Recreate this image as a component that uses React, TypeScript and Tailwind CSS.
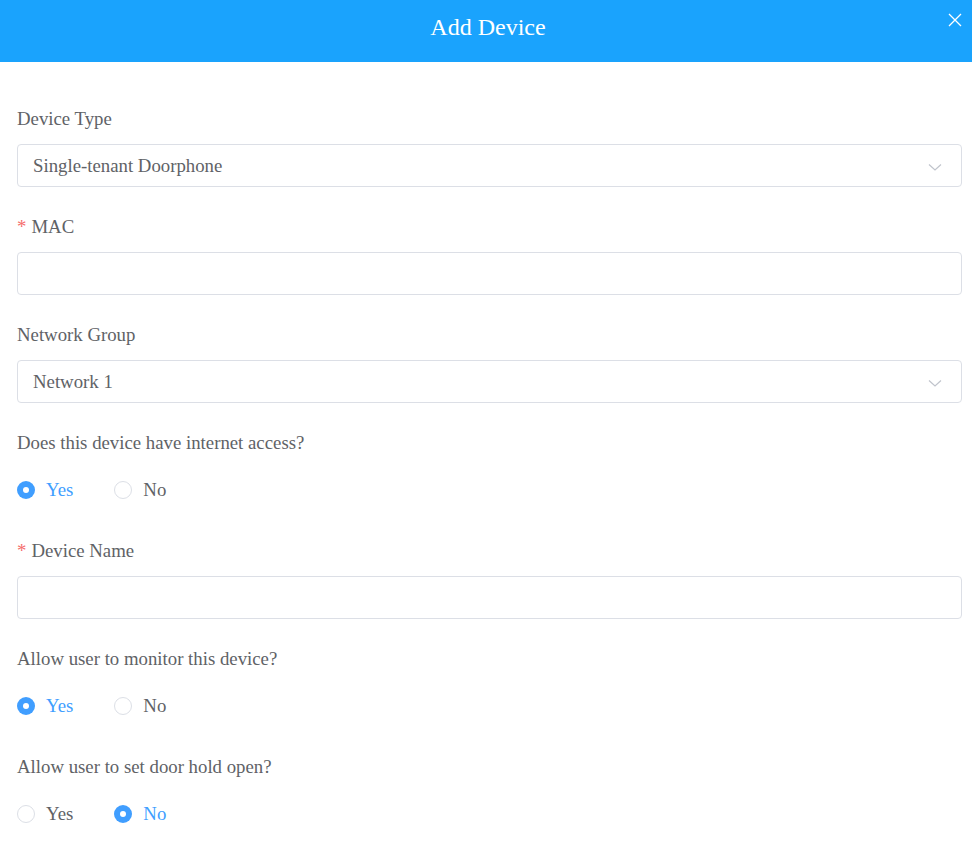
import React, { useState } from 'react';

const serif = { fontFamily: '"Liberation Serif", "Times New Roman", serif' };

const Chevron = () => (
  <svg width="16" height="16" viewBox="0 0 16 16" fill="none" stroke="#c0c4cc" strokeWidth="1.2">
    <path d="M2 5.5 L8 11 L14 5.5" />
  </svg>
);

const Label = ({ text, required }: { text: string; required?: boolean }) => (
  <div className="h-10 flex items-center text-[18.8px] text-[#606266]">
    {required && <span className="text-[#f56c6c] mr-[5px]">*</span>}
    {text}
  </div>
);

const SelectBox = ({ value }: { value: string }) => (
  <div className="mt-[5px] h-[43px] border border-[#dcdfe6] rounded-[4px] flex items-center justify-between pl-[15px] pr-[18px] pt-[2px] text-[18.8px] text-[#606266]">
    <span>{value}</span>
    <Chevron />
  </div>
);

const TextBox = () => (
  <input className="mt-[5px] block w-full h-[43px] border border-[#dcdfe6] rounded-[4px] px-[15px] text-[18.8px] text-[#606266] outline-none" />
);

const RadioGroup = ({ value, onChange }: { value: string; onChange: (v: string) => void }) => (
  <div className="mt-[7px] h-10 flex items-center gap-[41px]">
    {['Yes', 'No'].map((opt) => {
      const on = value === opt;
      return (
        <button key={opt} onClick={() => onChange(opt)} className="flex items-center text-[18.8px]">
          <span
            className={
              on
                ? 'w-[18px] h-[18px] rounded-full bg-[#409eff] flex items-center justify-center'
                : 'w-[18px] h-[18px] rounded-full border border-[#dcdfe6] bg-white'
            }
          >
            {on && <span className="w-[6px] h-[6px] rounded-full bg-white" />}
          </span>
          <span className={on ? 'ml-[11px] text-[#409eff]' : 'ml-[11px] text-[#606266]'}>{opt}</span>
        </button>
      );
    })}
  </div>
);

export default function App() {
  const [internet, setInternet] = useState('Yes');
  const [monitor, setMonitor] = useState('Yes');
  const [holdOpen, setHoldOpen] = useState('No');

  return (
    <div className="w-[972px] h-[855px] bg-white overflow-hidden" style={serif}>
      <div className="relative h-[62px] bg-[#1aa3fd] flex items-center justify-center">
        <h2 className="text-white text-[24px] -mt-[8px] ml-[4px]">Add Device</h2>
        <button className="absolute right-[10px] top-[13px] text-white">
          <svg width="14" height="14" viewBox="0 0 14 14" stroke="white" strokeWidth="1.3">
            <path d="M1 1 L13 13 M13 1 L1 13" />
          </svg>
        </button>
      </div>

      <div className="pt-[37px] pl-[17px] pr-[10px]">
        <Label text="Device Type" />
        <SelectBox value="Single-tenant Doorphone" />

        <div className="mt-5">
          <Label text="MAC" required />
          <TextBox />
        </div>

        <div className="mt-5">
          <Label text="Network Group" />
          <SelectBox value="Network 1" />
        </div>

        <div className="mt-5">
          <Label text="Does this device have internet access?" />
          <RadioGroup value={internet} onChange={setInternet} />
        </div>

        <div className="mt-[21px]">
          <Label text="Device Name" required />
          <TextBox />
        </div>

        <div className="mt-5">
          <Label text="Allow user to monitor this device?" />
          <RadioGroup value={monitor} onChange={setMonitor} />
        </div>

        <div className="mt-[21px]">
          <Label text="Allow user to set door hold open?" />
          <RadioGroup value={holdOpen} onChange={setHoldOpen} />
        </div>
      </div>
    </div>
  );
}
